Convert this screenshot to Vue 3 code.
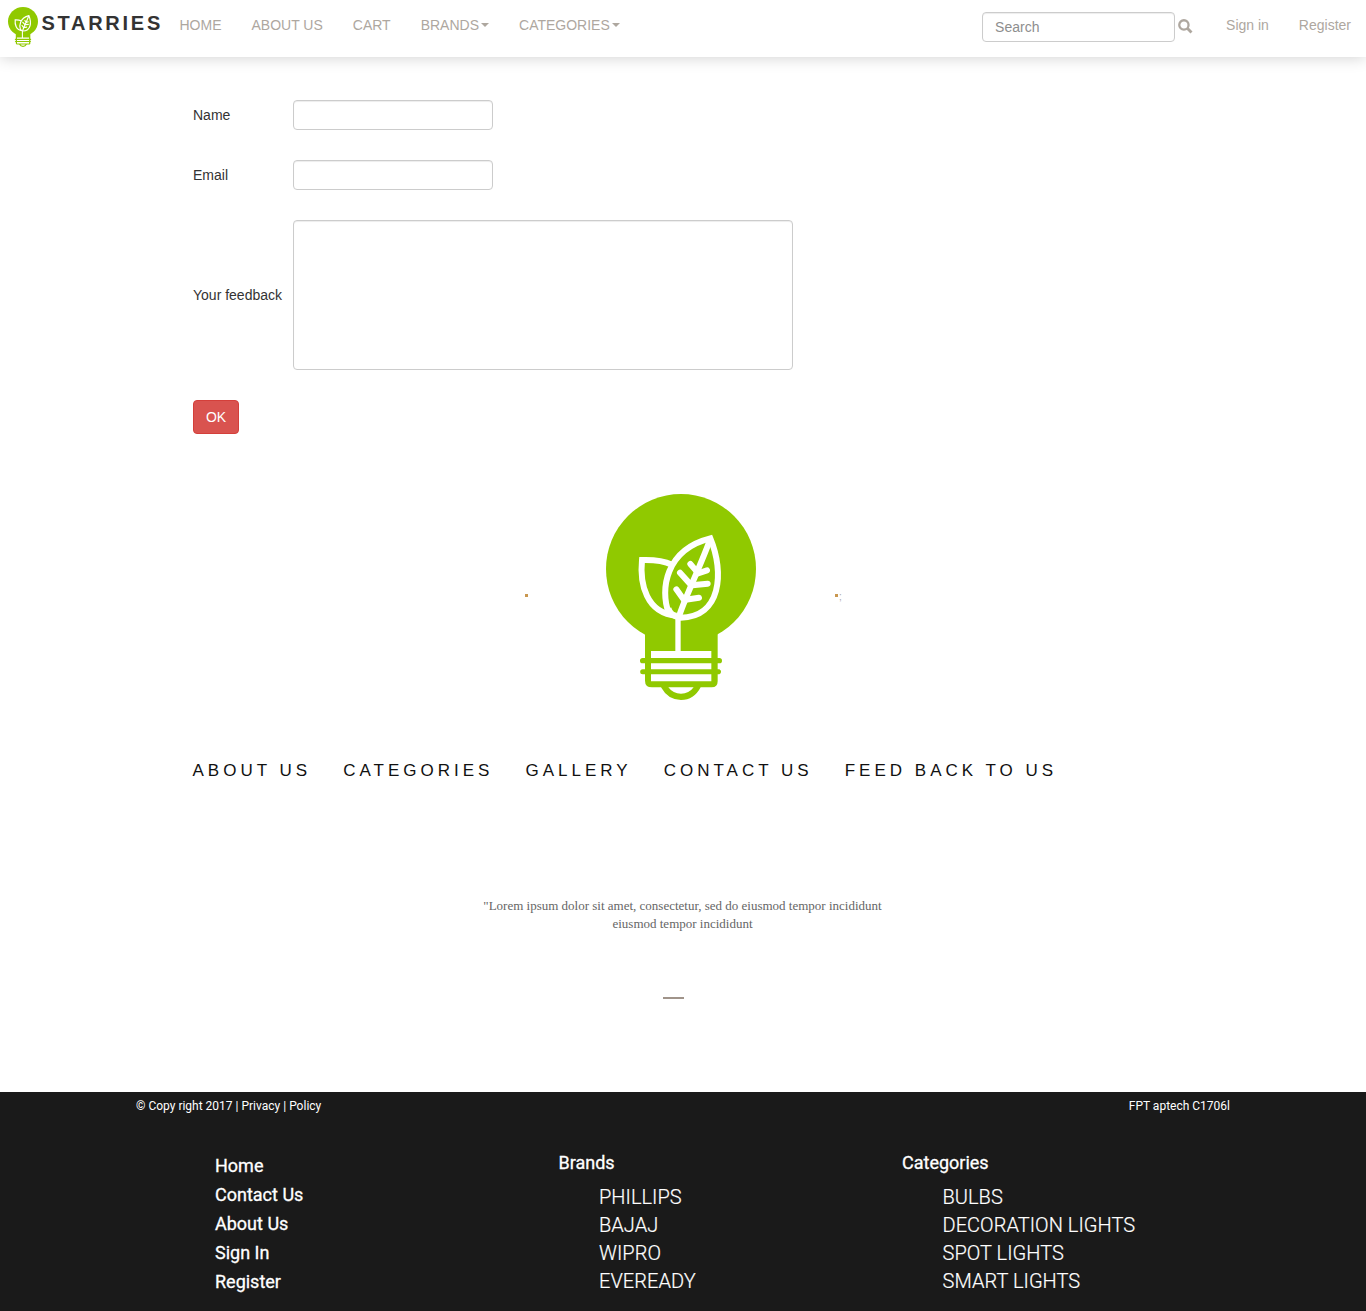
<script setup>
const links = [
  { label: 'HOME' },
  { label: 'ABOUT US' },
  { label: 'CART' },
  { label: 'BRANDS', caret: true },
  { label: 'CATEGORIES', caret: true },
]
const sections = ['ABOUT US', 'CATEGORIES', 'GALLERY', 'CONTACT US', 'FEED BACK TO US']
const pages = ['Home', 'Contact Us', 'About Us', 'Sign In', 'Register']
const brands = ['PHILLIPS', 'BAJAJ', 'WIPRO', 'EVEREADY']
const categories = ['BULBS', 'DECORATION LIGHTS', 'SPOT LIGHTS', 'SMART LIGHTS']
</script>

<template>
  <div class="page">
    <svg class="defs" aria-hidden="true">
      <symbol id="bulb" viewBox="48 42 450 618" preserveAspectRatio="none">
        <circle cx="273" cy="267" r="225" fill="#90c900" />
        <path fill="#90c900" d="M165 440H383V534H388A8 8 0 0 1 388 550H383V568H388A8 8 0 0 1 388 583H383V604Q383 622 365 622H332Q312 660 273 660Q234 660 213 622H186Q165 622 165 602V583H158A7 7 0 0 1 158 568H165V550H158A7 7 0 0 1 158 534H165Z" />
        <path fill="#fff" d="M183 513H256V410H272V513H364V534H183ZM183 550H364V568H183ZM183 583H364V604H183ZM235 622H311Q297 641 273 641Q249 641 235 622Z" />
        <g fill="none" stroke="#fff" stroke-width="18">
          <path d="M246 254C220 242 188 239 156 240C149 310 168 401 260 407" />
          <path d="M236 398C210 330 226 209 361 175C404 278 393 412 272 413C250 411 239 400 235 385" />
          <path d="M267 410C278 368 334 253 361 176" />
          <g stroke-linecap="round">
            <path d="M301 252L325 280L351 271M270 278L304 316L353 311M259 328L282 360L327 353" />
          </g>
        </g>
      </symbol>
    </svg>

    <header class="navbar">
      <a class="brand"><svg class="logo"><use href="#bulb" /></svg><span>STARRIES</span></a>
      <nav class="links">
        <a v-for="l in links" :key="l.label">{{ l.label }}<i v-if="l.caret" class="caret"></i></a>
      </nav>
      <div class="search">
        <input type="text" placeholder="Search" />
        <svg class="glass" viewBox="0 0 14 14"><circle cx="5.7" cy="5.7" r="4.5" fill="none" stroke="#aea79f" stroke-width="2.2" /><path d="M9 9L13 13" stroke="#aea79f" stroke-width="2.8" /></svg>
      </div>
      <a class="signin">Sign in</a>
      <a class="register">Register</a>
    </header>

    <form class="feedback" @submit.prevent>
      <label class="row"><span>Name</span><input type="text" /></label>
      <label class="row"><span>Email</span><input type="text" /></label>
      <label class="row"><span>Your feedback</span><textarea></textarea></label>
      <button type="submit">OK</button>
    </form>

    <div class="emblem">
      <i class="dot"></i>
      <svg class="big"><use href="#bulb" /></svg>
      <i class="dot"></i><span class="semi">;</span>
    </div>

    <nav class="sections"><a v-for="s in sections" :key="s">{{ s }}</a></nav>

    <p class="quote">"Lorem ipsum dolor sit amet, consectetur, sed do eiusmod tempor incididunt<br />eiusmod tempor incididunt</p>
    <div class="dash"></div>

    <footer class="footer">
      <div class="legal"><span>© Copy right 2017 | Privacy | Policy</span><span>FPT aptech C1706l</span></div>
      <div class="cols">
        <div class="col pages"><a v-for="p in pages" :key="p">{{ p }}</a></div>
        <div class="col">
          <h4>Brands</h4>
          <ul><li v-for="b in brands" :key="b">{{ b }}</li></ul>
        </div>
        <div class="col">
          <h4>Categories</h4>
          <ul><li v-for="c in categories" :key="c">{{ c }}</li></ul>
        </div>
      </div>
    </footer>
  </div>
</template>

<style>
body { margin: 0; background: #fff; }
</style>

<style scoped>
* { box-sizing: border-box; }
.page {
  height: 1311px;
  display: flex;
  flex-direction: column;
  overflow: hidden;
  font: 14px/20px "Liberation Sans", Arial, sans-serif;
  color: #333;
}
.defs { display: none; }
.navbar {
  height: 57px;
  flex: none;
  display: flex;
  align-items: flex-start;
  color: #aea79f;
  box-shadow: 0 0 15px rgba(0, 0, 0, 0.2);
}
.brand { display: flex; width: 164.5px; padding: 7px 0 0 8px; }
.logo { width: 30px; height: 40px; margin-right: 3.4px; }
.brand span {
  font-weight: bold;
  font-size: 20px;
  line-height: 33px;
  letter-spacing: 2.75px;
  color: #333;
}
.links { display: flex; }
.links a { padding: 15px; display: flex; align-items: center; }
.caret {
  margin-left: 2px;
  border: 4px solid transparent;
  border-top-color: #aea79f;
  border-bottom: 0;
}
.search { margin-left: auto; display: flex; padding-top: 12px; }
input, textarea {
  border: 1px solid #ccc;
  border-radius: 4px;
  box-shadow: inset 0 1px 1px rgba(0, 0, 0, 0.075);
  font: inherit;
  padding: 5px 12px;
  background: #fff;
  outline: 0;
  resize: none;
}
.search input { width: 193px; height: 30px; }
.search input::placeholder { color: #8e8e8e; opacity: 1; }
.glass { width: 14.5px; height: 14.5px; margin: 7px 0 0 3.3px; }
.signin { padding: 15px 15px 0 33.2px; }
.register { padding: 15px 15px 0; }
.feedback {
  margin: 43px 0 0 193px;
  display: flex;
  flex-direction: column;
  align-items: flex-start;
  gap: 30px;
}
.row { display: flex; align-items: center; }
.row span { width: 100px; }
.row input { width: 200px; height: 30px; }
.row textarea { width: 500px; height: 150px; display: block; }
button {
  width: 46px;
  height: 34px;
  padding: 0;
  font: inherit;
  color: #fff;
  background: #d9534f;
  border: 1px solid #d43f3a;
  border-radius: 4px;
}
.emblem { display: flex; align-items: center; margin: 60px 0 0 525px; height: 206px; }
.dot { width: 3px; height: 3px; background: #c9974f; margin-top: -3px; }
.big { width: 150px; height: 206px; margin: 0 79px 0 78px; }
.semi { font-size: 10px; line-height: 10px; color: #aaa; margin-left: 1px; }
.sections {
  display: flex;
  gap: 32.1px;
  margin: 61px 0 0 192.5px;
  font-size: 17px;
  letter-spacing: 4px;
  color: #111;
  white-space: nowrap;
}
.quote {
  margin: 116px 1px 0 0;
  text-align: center;
  font: 13px/18px "Liberation Serif", "Times New Roman", serif;
  color: #666;
}
.dash { width: 21px; height: 2px; margin: 64px 0 0 663px; background: #a0948a; }
.footer {
  margin-top: auto;
  height: 219px;
  flex: none;
  background: #1a1a1a;
  color: #fff;
  font-family: Roboto, sans-serif;
}
.legal {
  display: flex;
  justify-content: space-between;
  padding: 4px 136px 0;
  font-size: 12px;
}
.cols { display: flex; padding: 37px 0 0 215px; }
.col { width: 343.5px; }
.col h4 { margin: 0; font-size: 18px; font-weight: 400; line-height: 20px; -webkit-text-stroke: 0.3px #fff; }
.col ul { list-style: none; margin: 10px 0 0; padding: 0 0 0 40.5px; font-size: 20px; font-weight: 300; line-height: 28px; letter-spacing: 0.04px; -webkit-text-stroke: 0.2px #fff; }
.pages { display: flex; flex-direction: column; margin-top: -2px; font-size: 18px; line-height: 29px; -webkit-text-stroke: 0.3px #fff; }
</style>
